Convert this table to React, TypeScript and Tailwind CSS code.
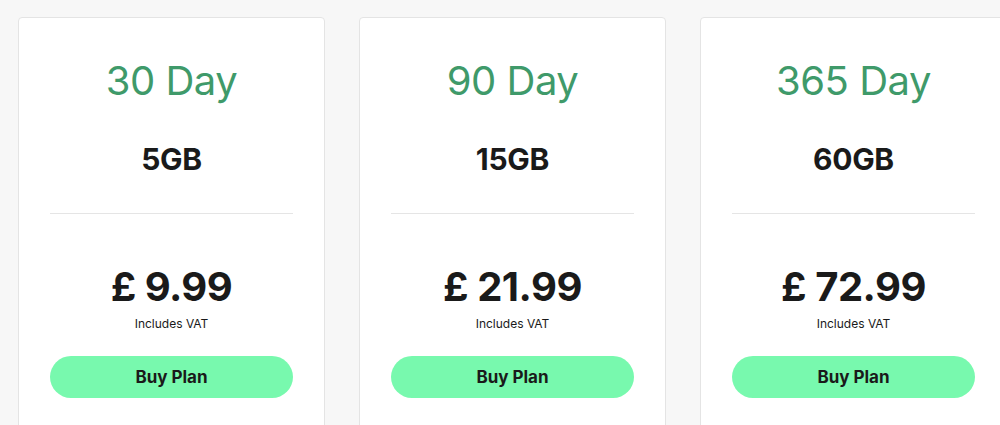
import React from "react";

const plans = [
  { days: "30 Day", data: "5GB", price: "£ 9.99" },
  { days: "90 Day", data: "15GB", price: "£ 21.99" },
  { days: "365 Day", data: "60GB", price: "£ 72.99" },
];

export default function App() {
  return (
    <div
      className="w-[1000px] h-[425px] overflow-hidden bg-[#f7f7f7] pl-[18px] pt-[17px] flex gap-[34px]"
      style={{ fontFamily: "Inter, 'Noto Sans', sans-serif" }}
    >
      {plans.map((p) => (
        <div
          key={p.days}
          className="w-[307px] shrink-0 h-[440px] bg-white border border-[#e4e4e4] rounded-[4px] px-[31px] pt-[39px] flex flex-col items-center text-[#1a1a1a]"
        >
          <div className="text-[40px] leading-[48px] text-[#3f9a6a] tracking-[-0.5px]">{p.days}</div>
          <div className="mt-[38px] text-[30px] leading-[32px] font-bold tracking-[-0.3px]">{p.data}</div>
          <div className="mt-[38px] w-full h-px bg-[#e5e5e5]" />
          <div className="mt-[49px] text-[40px] leading-[48px] font-bold tracking-[-0.5px]">{p.price}</div>
          <div className="mt-[5px] text-[12px] leading-[16px]">Includes VAT</div>
          <button className="mt-[24px] w-full h-[42px] pt-[2px] rounded-full bg-[#78f9ae] text-[17px] font-bold text-[#1a1a1a]">
            Buy Plan
          </button>
        </div>
      ))}
    </div>
  );
}
